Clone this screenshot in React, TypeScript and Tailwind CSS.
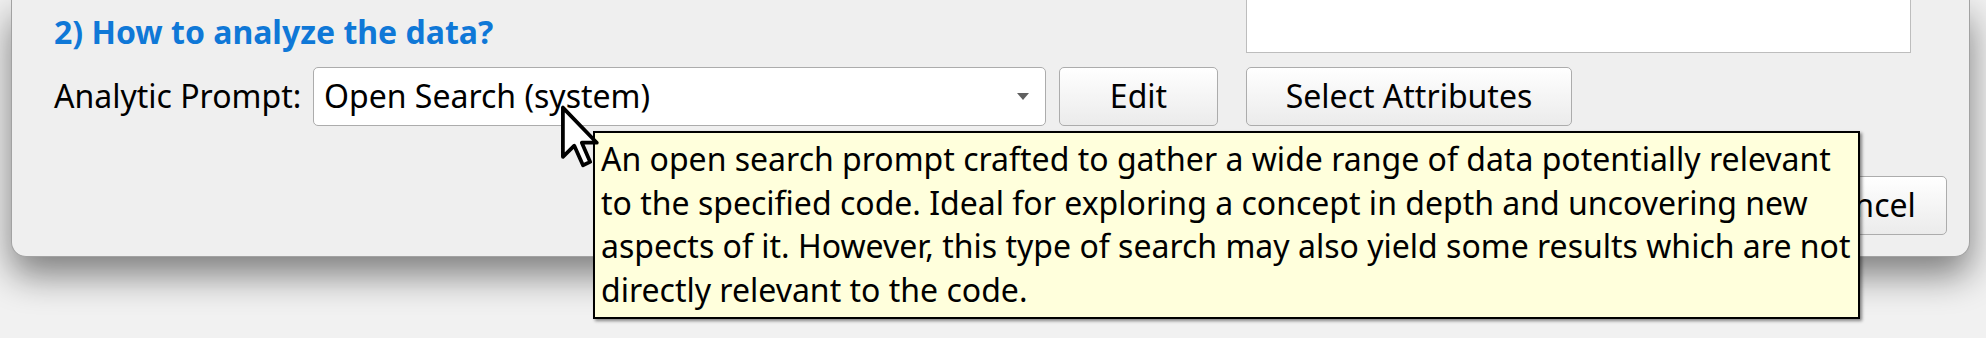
import React from 'react';

const font = { fontFamily: '"Noto Sans", "Open Sans", sans-serif' };

function PushButton({ label, className }: { label: string; className: string }) {
  return (
    <div
      className={
        'flex h-[59px] items-center justify-center rounded-[5px] border border-[#acacac] bg-gradient-to-b from-white to-[#ebebeb] text-[32px] leading-[43.5px] text-black ' +
        className
      }
    >
      {label}
    </div>
  );
}

function Cursor() {
  return (
    <svg
      className="absolute left-[559px] top-[104px]"
      width="42"
      height="66"
      viewBox="0 0 14 22"
    >
      <path
        d="M1.3 1.2 L1.3 17.6 L5.1 13.9 L8 20.4 L10.4 19.3 L7.6 12.9 L12.6 12.9 Z"
        fill="#fff"
        stroke="#000"
        strokeWidth="1.25"
        strokeLinejoin="round"
      />
    </svg>
  );
}

export default function App() {
  return (
    <div
      className="relative h-[338px] w-[1986px] overflow-hidden bg-[#f1f1f1]"
      style={font}
    >
      {/* dialog */}
      <div className="ml-[11px] flex h-[257px] w-[1959px] flex-col rounded-b-[15px] border-x border-b border-[#a2a2a2] bg-[#efefef] shadow-[0_18px_36px_rgba(0,0,0,0.48)]">
        <div className="flex justify-between pl-[42px]">
          <h2 className="mt-[10px] text-[32px] font-bold leading-[43.5px] text-[#0f78d7]">
            2) How to analyze the data?
          </h2>
          <div className="mr-[58px] h-[53px] w-[665px] border-x border-b border-[#bdbdbd] bg-white" />
        </div>

        <div className="mt-[13px] flex h-[59px] items-center pl-[42px]">
          <div className="w-[259px] text-[32px] leading-[43.5px] text-black">Analytic Prompt:</div>
          <div className="flex h-[59px] w-[733px] items-center justify-between rounded-[5px] border border-[#acacac] bg-white pl-[10px] pr-[16px]">
            <span className="text-[32px] leading-[43.5px] text-black">Open Search (system)</span>
            <span className="h-0 w-0 border-x-[6px] border-t-[7px] border-x-transparent border-t-[#606060]" />
          </div>
          <PushButton label="Edit" className="ml-[13px] w-[159px]" />
          <PushButton label="Select Attributes" className="ml-[28px] w-[326px]" />
        </div>

        <div className="mt-[50px] flex justify-end pr-[22px]">
          <PushButton label="Cancel" className="w-[162px]" />
        </div>
      </div>

      {/* tooltip */}
      <div className="absolute left-[593px] top-[131px] h-[188px] w-[1267px] border-2 border-black bg-[#ffffdc] px-[6px] pt-[4px] text-[32px] leading-[43.5px] text-black shadow-[2px_2px_3px_rgba(0,0,0,0.45)]">
        <div className="whitespace-nowrap">An open search prompt crafted to gather a wide range of data potentially relevant</div>
        <div className="whitespace-nowrap">to the specified code. Ideal for exploring a concept in depth and uncovering new</div>
        <div className="whitespace-nowrap">aspects of it. However, this type of search may also yield some results which are not</div>
        <div className="whitespace-nowrap">directly relevant to the code.</div>
      </div>

      <Cursor />
    </div>
  );
}
